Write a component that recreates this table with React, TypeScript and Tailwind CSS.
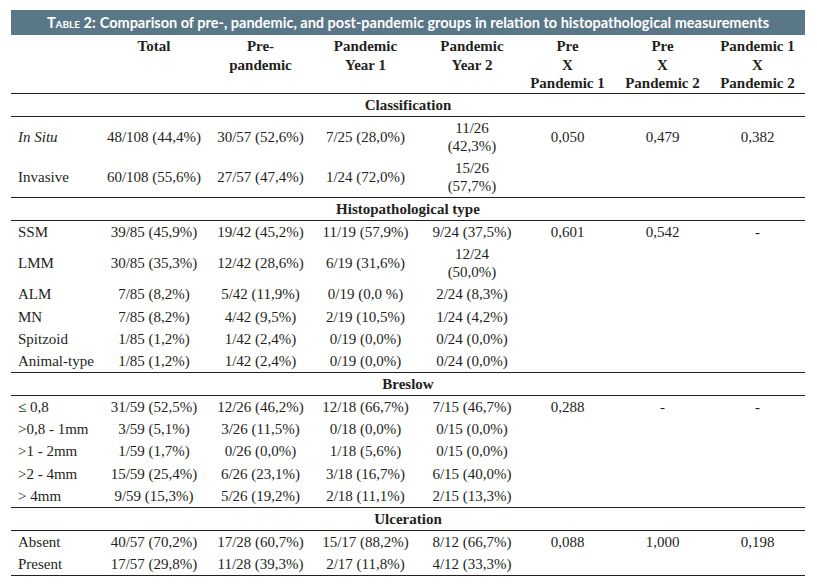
import React from "react";

type Row = { label: React.ReactNode; cells: React.ReactNode[] };
type Section = { title: string; rows: Row[] };

const sections: Section[] = [
  {
    title: "Classification",
    rows: [
      {
        label: <i>In Situ</i>,
        cells: ["48/108 (44,4%)", "30/57 (52,6%)", "7/25 (28,0%)", <>11/26<br />(42,3%)</>, "0,050", "0,479", "0,382"],
      },
      {
        label: "Invasive",
        cells: ["60/108 (55,6%)", "27/57 (47,4%)", "1/24 (72,0%)", <>15/26<br />(57,7%)</>, "", "", ""],
      },
    ],
  },
  {
    title: "Histopathological type",
    rows: [
      { label: "SSM", cells: ["39/85 (45,9%)", "19/42 (45,2%)", "11/19 (57,9%)", "9/24 (37,5%)", "0,601", "0,542", "-"] },
      { label: "LMM", cells: ["30/85 (35,3%)", "12/42 (28,6%)", "6/19 (31,6%)", <>12/24<br />(50,0%)</>, "", "", ""] },
      { label: "ALM", cells: ["7/85 (8,2%)", "5/42 (11,9%)", "0/19 (0,0 %)", "2/24 (8,3%)", "", "", ""] },
      { label: "MN", cells: ["7/85 (8,2%)", "4/42 (9,5%)", "2/19 (10,5%)", "1/24 (4,2%)", "", "", ""] },
      { label: "Spitzoid", cells: ["1/85 (1,2%)", "1/42 (2,4%)", "0/19 (0,0%)", "0/24 (0,0%)", "", "", ""] },
      { label: "Animal-type", cells: ["1/85 (1,2%)", "1/42 (2,4%)", "0/19 (0,0%)", "0/24 (0,0%)", "", "", ""] },
    ],
  },
  {
    title: "Breslow",
    rows: [
      { label: "≤ 0,8", cells: ["31/59 (52,5%)", "12/26 (46,2%)", "12/18 (66,7%)", "7/15 (46,7%)", "0,288", "-", "-"] },
      { label: ">0,8 - 1mm", cells: ["3/59 (5,1%)", "3/26 (11,5%)", "0/18 (0,0%)", "0/15 (0,0%)", "", "", ""] },
      { label: ">1 - 2mm", cells: ["1/59 (1,7%)", "0/26 (0,0%)", "1/18 (5,6%)", "0/15 (0,0%)", "", "", ""] },
      { label: ">2 - 4mm", cells: ["15/59 (25,4%)", "6/26 (23,1%)", "3/18 (16,7%)", "6/15 (40,0%)", "", "", ""] },
      { label: "> 4mm", cells: ["9/59 (15,3%)", "5/26 (19,2%)", "2/18 (11,1%)", "2/15 (13,3%)", "", "", ""] },
    ],
  },
  {
    title: "Ulceration",
    rows: [
      { label: "Absent", cells: ["40/57 (70,2%)", "17/28 (60,7%)", "15/17 (88,2%)", "8/12 (66,7%)", "0,088", "1,000", "0,198"] },
      { label: "Present", cells: ["17/57 (29,8%)", "11/28 (39,3%)", "2/17 (11,8%)", "4/12 (33,3%)", "", "", ""] },
    ],
  },
];

const headers: React.ReactNode[] = [
  "Total",
  <>Pre-<br />pandemic</>,
  <>Pandemic<br />Year 1</>,
  <>Pandemic<br />Year 2</>,
  <>Pre<br />X<br />Pandemic 1</>,
  <>Pre<br />X<br />Pandemic 2</>,
  <>Pandemic 1<br />X<br />Pandemic 2</>,
];

const widths = ["w-[89px]", "w-[108px]", "w-[105px]", "w-[105px]", "w-[102px]", "w-[95px]", "w-[95px]", "w-[95px]"];

export default function App() {
  return (
    <div className="min-h-[587px] w-[817px] bg-white pt-[10px] pl-[11px]">
      <div className="w-[794px]">
        <div className="flex h-[25px] items-center justify-center bg-[#5a7787] [font-family:Lato,sans-serif] text-[14.5px] font-bold text-white">
          <span className="[font-variant:small-caps]">Table 2:</span>
          <span className="ml-[4px]">Comparison of pre-, pandemic, and post-pandemic groups in relation to histopathological measurements</span>
        </div>

        <table className="w-[794px] table-fixed [font-family:'Liberation_Serif',serif] text-[15px] leading-[18px] text-[#231f20]">
          <colgroup>
            {widths.map((w, i) => (
              <col key={i} className={w} />
            ))}
          </colgroup>
          <thead>
            <tr className="border-b border-[#231f20]">
              <th className="pt-[2px]" />
              {headers.map((h, i) => (
                <th
                  key={i}
                  className={`whitespace-nowrap pt-[2px] text-center align-top font-bold leading-[18.5px] ${i === 3 ? "pl-[6px]" : ""}`}
                >
                  {h}
                </th>
              ))}
            </tr>
          </thead>
          {sections.map((s) => (
            <tbody key={s.title}>
              <tr className="border-b border-[#231f20]">
                <td colSpan={8} className="py-[2px] text-center font-bold">
                  {s.title}
                </td>
              </tr>
              {s.rows.map((r, ri) => (
                <tr key={ri} className={ri === s.rows.length - 1 ? "border-b border-[#231f20]" : ""}>
                  <td className="whitespace-nowrap py-[2.1px] pl-[7px] align-middle">{r.label}</td>
                  {r.cells.map((c, ci) => (
                    <td
                      key={ci}
                      className={`whitespace-nowrap py-[2.1px] text-center align-middle ${ci === 3 ? "pl-[6px]" : ""}`}
                    >
                      {c}
                    </td>
                  ))}
                </tr>
              ))}
            </tbody>
          ))}
        </table>
      </div>
    </div>
  );
}
